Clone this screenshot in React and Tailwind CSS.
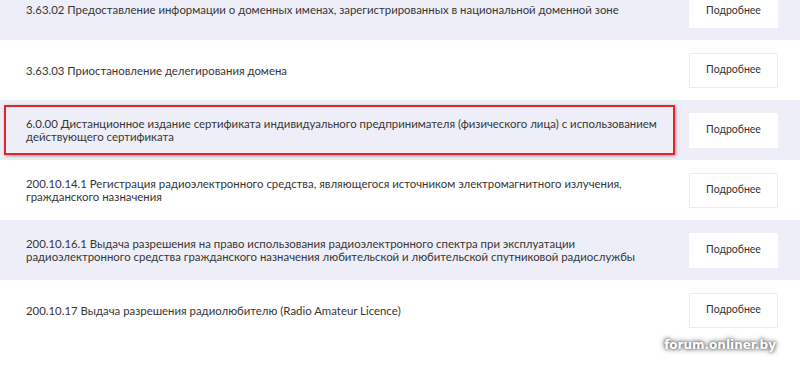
import React from "react";

const ROWS = [
  { text: "3.63.02 Предоставление информации о доменных именах, зарегистрированных в национальной доменной зоне", h: "h-[40px]", shade: true, btnTop: true },
  { text: "3.63.03 Приостановление делегирования домена", h: "h-[60px]", shade: false },
  { text: "6.0.00 Дистанционное издание сертификата индивидуального предпринимателя (физического лица) с использованием действующего сертификата", h: "h-[60px]", shade: true, marked: true },
  { text: "200.10.14.1 Регистрация радиоэлектронного средства, являющегося источником электромагнитного излучения, гражданского назначения", h: "h-[60px]", shade: false },
  { text: "200.10.16.1 Выдача разрешения на право использования радиоэлектронного спектра при эксплуатации радиоэлектронного средства гражданского назначения любительской и любительской спутниковой радиослужбы", h: "h-[60px]", shade: true },
  { text: "200.10.17 Выдача разрешения радиолюбителю (Radio Amateur Licence)", h: "h-[60px]", shade: false },
];

function Row({ row }) {
  return (
    <div className={`relative flex ${row.btnTop ? "items-end pb-[12px]" : "items-center"} ${row.h} ${row.shade ? "bg-[#eeeef8]" : "bg-white"}`}>
      {row.marked && (
        <div className="absolute left-[4px] top-[5px] w-[671px] h-[50px] border-2 border-[#e3262b] shadow-[1px_1px_3px_rgba(0,0,0,0.35)]" />
      )}
      <div className={`flex-1 pl-[26px] pr-[20px] text-[11.4px] leading-[13px] text-[#363636] ${row.btnTop ? "self-start pt-[3px]" : ""}`}>
        <div className="max-w-[642px]">{row.text}</div>
      </div>
      <div className="pr-[22px]">
        <button className={`w-[89px] h-[35px] bg-white text-[10.5px] text-[#333] ${row.shade ? "" : "border border-[#ececec]"}`}>
          Подробнее
        </button>
      </div>
    </div>
  );
}

export default function App() {
  return (
    <div className="relative w-[800px] h-[366px] overflow-hidden bg-white font-['Lato',sans-serif]">
      {ROWS.map((r) => (
        <Row key={r.text} row={r} />
      ))}
      <div className="absolute right-[20px] bottom-[14px] px-[4px] font-['DejaVu_Sans',sans-serif] font-bold text-[12px] leading-[14px] text-white [text-shadow:0_0_4px_#666,0_0_6px_#888,0_0_2px_#777]">
        forum.onliner.by
      </div>
    </div>
  );
}
